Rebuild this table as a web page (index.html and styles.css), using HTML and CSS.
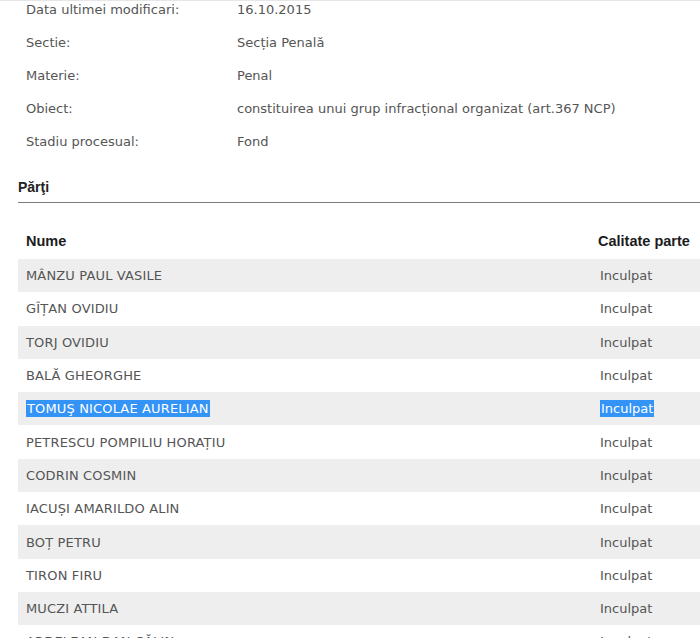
FILE: index.html
```html
<!DOCTYPE html>
<html lang="ro">
<head>
<meta charset="utf-8">
<title>Dosar</title>
<link rel="stylesheet" href="styles.css">
</head>
<body>
<div class="page">
  <div class="info">
    <div class="info-row"><span class="label">Data ultimei modificari:</span><span class="value">16.10.2015</span></div>
    <div class="info-row"><span class="label">Sectie:</span><span class="value">Secția Penală</span></div>
    <div class="info-row"><span class="label">Materie:</span><span class="value">Penal</span></div>
    <div class="info-row"><span class="label">Obiect:</span><span class="value">constituirea unui grup infracțional organizat (art.367 NCP)</span></div>
    <div class="info-row"><span class="label">Stadiu procesual:</span><span class="value">Fond</span></div>
  </div>
  <h3 class="section-title">Părţi</h3>
  <table class="parti">
    <thead>
      <tr><th class="col-name">Nume</th><th class="col-cal">Calitate parte</th></tr>
    </thead>
    <tbody>
      <tr><td>MÂNZU PAUL VASILE</td><td class="cal">Inculpat</td></tr>
      <tr><td>GÎȚAN OVIDIU</td><td class="cal">Inculpat</td></tr>
      <tr><td>TORJ OVIDIU</td><td class="cal">Inculpat</td></tr>
      <tr><td>BALĂ GHEORGHE</td><td class="cal">Inculpat</td></tr>
      <tr><td><span class="sel">TOMUŞ NICOLAE AURELIAN</span></td><td class="cal"><span class="sel">Inculpat</span></td></tr>
      <tr><td>PETRESCU POMPILIU HORAȚIU</td><td class="cal">Inculpat</td></tr>
      <tr><td>CODRIN COSMIN</td><td class="cal">Inculpat</td></tr>
      <tr><td>IACUȘI AMARILDO ALIN</td><td class="cal">Inculpat</td></tr>
      <tr><td>BOȚ PETRU</td><td class="cal">Inculpat</td></tr>
      <tr><td>TIRON FIRU</td><td class="cal">Inculpat</td></tr>
      <tr><td>MUCZI ATTILA</td><td class="cal">Inculpat</td></tr>
      <tr><td>ARDELEAN DAN CĂLIN</td><td class="cal">Inculpat</td></tr>
    </tbody>
  </table>
</div>
</body>
</html>
```

FILE: styles.css
```css
html, body {
  margin: 0;
  padding: 0;
  background: #ffffff;
  overflow: hidden;
}

.page {
  width: 700px;
  height: 638px;
  border-top: 1px solid #e6e6e6;
  box-sizing: border-box;
  overflow: hidden;
  font-family: "DejaVu Sans", Verdana, sans-serif;
  color: #555555;
}

.info {
  margin-top: -8px;
  padding-left: 26px;
}

.info-row {
  display: grid;
  grid-template-columns: 211px 1fr;
  height: 33px;
  align-items: center;
  font-size: 13px;
  letter-spacing: 0;
}

.section-title {
  margin: 20px 0 0 18px;
  padding: 0 0 6px 0;
  font-family: "Liberation Sans", Arial, sans-serif;
  font-size: 14px;
  font-weight: bold;
  color: #222222;
  border-bottom: 1px solid #7a7a7a;
  line-height: 18px;
}

.parti {
  margin: 20px 0 0 18px;
  width: 700px;
  border-collapse: collapse;
  table-layout: fixed;
}

.parti th {
  font-family: "Liberation Sans", Arial, sans-serif;
  font-size: 14.5px;
  font-weight: bold;
  color: #1c1c1c;
  text-align: left;
  height: 36px;
  padding: 0 0 0 8px;
  white-space: nowrap;
}

.col-name { width: 564px; }
.col-cal { padding-left: 8px; }

.parti td {
  height: 33.3px;
  padding: 0 0 0 8px;
  font-size: 13px;
  letter-spacing: 0.15px;
  color: #555555;
  white-space: nowrap;
}

.parti td.cal {
  padding-left: 10px;
  letter-spacing: 0;
}

.parti tbody tr:nth-child(odd) td {
  background: #eeeeee;
}

.sel {
  background: #3393f7;
  color: #ffffff;
  padding: 1px 1px;
}
```
